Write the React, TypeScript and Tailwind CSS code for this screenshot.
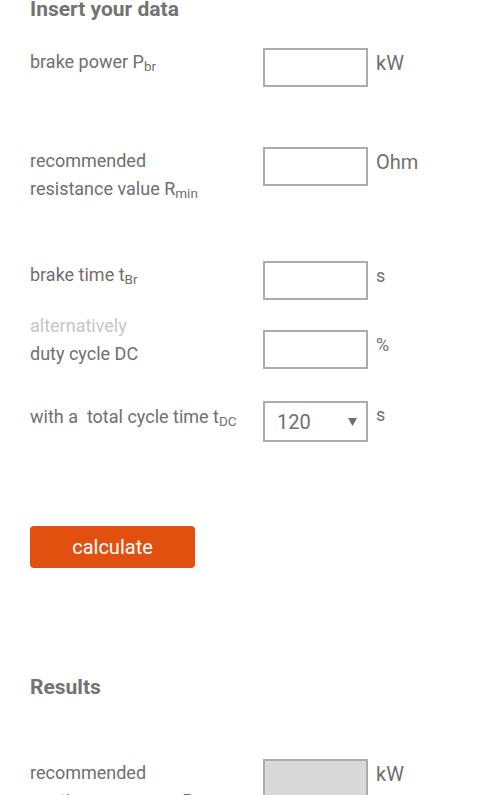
import type { ReactNode } from 'react'

const font = { fontFamily: 'Roboto, "Liberation Sans", sans-serif' }

function Box({ gray = false }: { gray?: boolean }) {
  return (
    <div
      className={`h-[39px] w-[105px] shrink-0 border-2 border-[#acacac] ${gray ? 'bg-[#d9d9d9]' : 'bg-white'}`}
    />
  )
}

function Unit({ children, small = false, className = '' }: { children: ReactNode; small?: boolean; className?: string }) {
  return (
    <div className={`ml-[8px] ${small ? 'text-[18px]' : 'text-[20px]'} leading-[28px] text-[#6f6f6f] ${className}`}>
      {children}
    </div>
  )
}

function Label({ children, className = '' }: { children: ReactNode; className?: string }) {
  return <div className={`w-[233px] shrink-0 text-[18px] leading-[28px] text-[#6f6f6f] ${className}`}>{children}</div>
}

export default function App() {
  return (
    <div className="min-h-[795px] w-full overflow-hidden bg-white px-[30px]" style={font}>
      <h2 className="-mt-[5px] text-[21px] font-bold leading-[28px] text-[#737373]">Insert your data</h2>

      <div className="mt-[25px] flex items-start">
        <Label>
          brake power P<sub>br</sub>
        </Label>
        <Box />
        <Unit className="pt-[1px]">kW</Unit>
      </div>

      <div className="mt-[60px] flex items-start">
        <Label>
          recommended
          <br />
          resistance value R<sub>min</sub>
        </Label>
        <Box />
        <Unit className="pt-[1px]">Ohm</Unit>
      </div>

      <div className="mt-[58px] flex items-start">
        <Label>
          brake time t<sub>Br</sub>
        </Label>
        <Box />
        <Unit small className="pt-[1px]">s</Unit>
      </div>

      <div className="mt-[12px] flex items-start">
        <Label>
          <span className="text-[#c6c6c6]">alternatively</span>
          <br />
          duty cycle DC
        </Label>
        <div className="mt-[18px] flex items-start">
          <Box />
          <Unit small className="pt-[1px]">%</Unit>
        </div>
      </div>

      <div className="mt-[32px] flex items-start">
        <Label className="pt-[2px]">
          with a&nbsp; total cycle time t<sub>DC</sub>
        </Label>
        <div className="flex h-[41px] w-[105px] shrink-0 items-center justify-between border-2 border-[#acacac] bg-white pl-[12px] pr-[9px]">
          <span className="text-[20px] leading-none text-[#6f6f6f]">120</span>
          <svg width="9" height="8" viewBox="0 0 9 8">
            <polygon points="0,0 9,0 4.5,8" fill="#6f6f6f" />
          </svg>
        </div>
        <Unit small>s</Unit>
      </div>

      <button className="mt-[84px] flex h-[42px] w-[165px] items-center justify-center rounded-[4px] bg-[#e2500f] text-[20px] text-white">
        calculate
      </button>

      <h2 className="mt-[105px] text-[21px] font-bold leading-[28px] text-[#737373]">Results</h2>

      <div className="mt-[58px] flex items-start">
        <Label>
          recommended
          <br />
          continuous power&nbsp; P<sub>cont</sub>
        </Label>
        <div className="h-[60px] w-[105px] shrink-0 border-2 border-[#acacac] bg-[#d9d9d9]" />
        <Unit className="pt-[1px]">kW</Unit>
      </div>
    </div>
  )
}
